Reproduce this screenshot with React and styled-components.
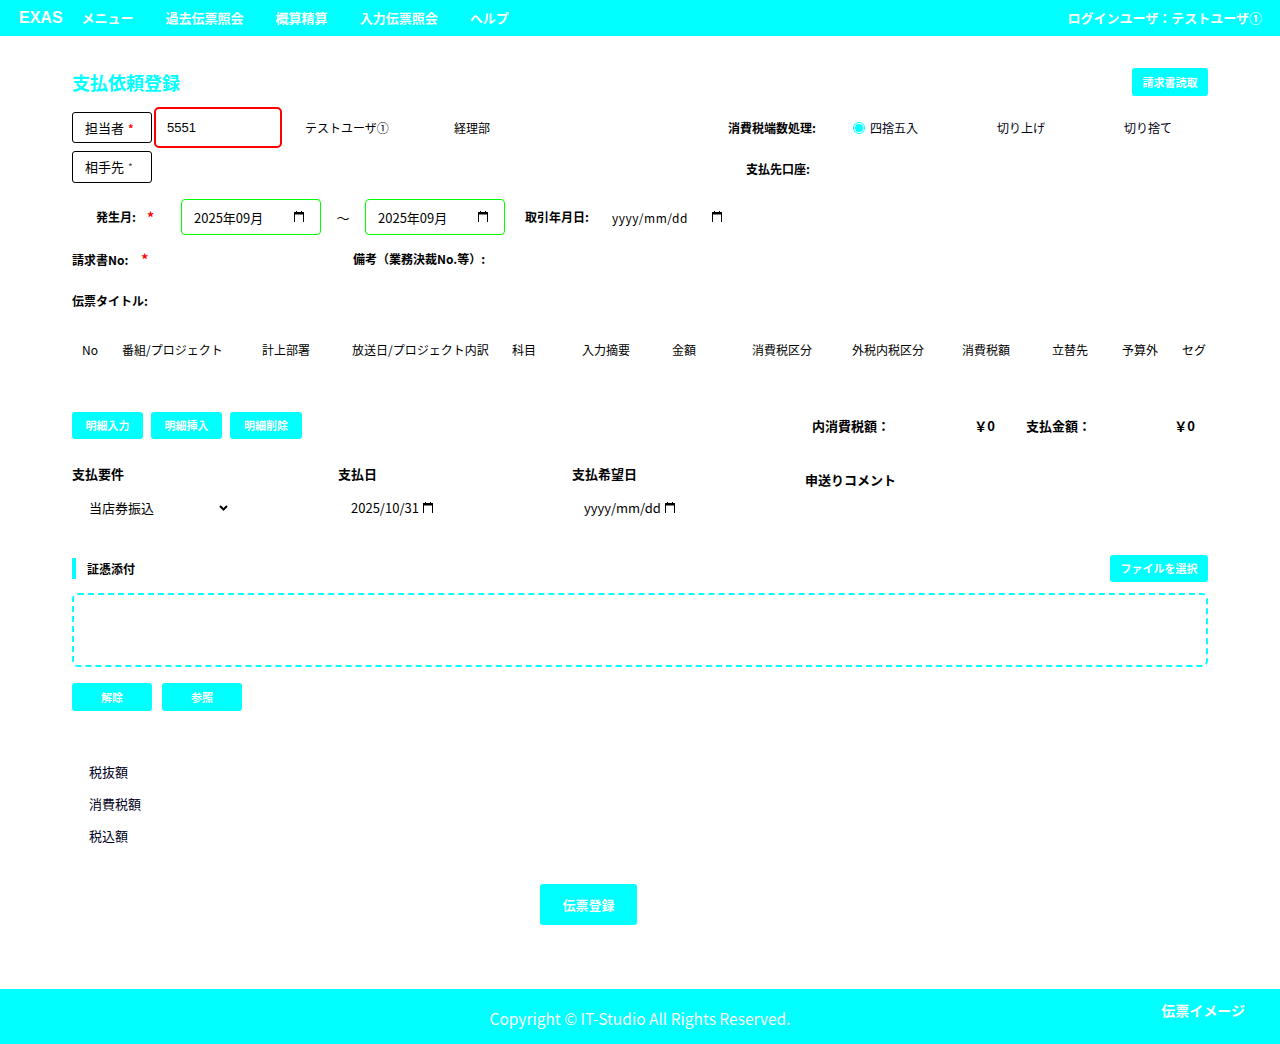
import React from 'react';
import styled, { createGlobalStyle } from 'styled-components';

const CYAN = '#00ffff';
const FONT = '"Noto Sans CJK JP", "Liberation Sans", sans-serif';

const Global = createGlobalStyle`
  html, body { margin: 0; padding: 0; background: #fff; }
  body { font-family: ${FONT}; color: #000; }
  * { box-sizing: border-box; }
`;

const Page = styled.div`
  width: 1280px;
  min-height: 1044px;
  display: flex;
  flex-direction: column;
`;

const Header = styled.header`
  height: 36px;
  background: ${CYAN};
  display: flex;
  align-items: center;
  padding: 0 18px 0 19px;
  color: #fff;
`;
const Logo = styled.div`
  font-family: "Liberation Sans", sans-serif;
  font-weight: 700;
  font-size: 16px;
  margin-right: 19px;
`;
const Nav = styled.nav`
  display: flex;
  gap: 32px;
`;
const NavItem = styled.span`
  font-size: 13px;
  font-weight: 700;
  line-height: 18px;
`;
const LoginUser = styled.span`
  margin-left: auto;
  font-size: 13px;
  font-weight: 700;
  line-height: 18px;
`;

const Main = styled.main`
  flex: 1;
  padding: 32px 72px 58px;
  display: flex;
  flex-direction: column;
`;

const TitleRow = styled.div`
  display: flex;
  justify-content: space-between;
  align-items: center;
  height: 28px;
`;
const Title = styled.h1`
  margin: 0;
  font-size: 18px;
  font-weight: 700;
  color: ${CYAN};
  line-height: 24px;
`;

const CyanButton = styled.button`
  background: ${CYAN};
  color: #fff;
  border: none;
  border-radius: 3px;
  font-family: ${FONT};
  font-weight: 700;
  font-size: ${(p) => p.$fs || 11}px;
  width: ${(p) => (p.$w ? `${p.$w}px` : 'auto')};
  height: ${(p) => p.$h || 28}px;
  padding: 0 ${(p) => (p.$w ? 0 : 9)}px;
  margin-left: ${(p) => (p.$push ? 'auto' : '0')};
  display: inline-flex;
  align-items: center;
  justify-content: center;
  line-height: 1;
  cursor: pointer;
`;

const TopGrid = styled.div`
  margin-top: 11px;
  display: grid;
  grid-template-columns: 656px 1fr;
  grid-template-rows: 41px 32px;
  row-gap: 3px;
`;
const Cell = styled.div`
  display: flex;
  align-items: center;
  padding-left: ${(p) => p.$pl || 0}px;
  padding-top: ${(p) => p.$pt || 0}px;
`;
const LabelBox = styled.div`
  width: 80px;
  height: ${(p) => p.$h || 31}px;
  border: 1px solid #000;
  border-radius: 3px;
  display: flex;
  align-items: center;
  padding-left: 12px;
  font-size: 13px;
  line-height: 18px;
`;
const Req = styled.span`
  color: ${(p) => (p.$muted ? '#444' : '#f00')};
  font-size: ${(p) => p.$fs || 11}px;
  margin-left: ${(p) => p.$ml || 4}px;
  font-weight: ${(p) => (p.$muted ? 400 : 700)};
`;
const RedInput = styled.div`
  margin-left: 2px;
  width: 128px;
  height: 41px;
  border: 2px solid #f00;
  border-radius: 5px;
  display: flex;
  align-items: center;
  padding-left: 11px;
  font-size: 13px;
  font-family: "Liberation Sans", sans-serif;
`;
const Plain = styled.span`
  font-size: ${(p) => p.$fs || 12}px;
  font-weight: ${(p) => (p.$bold ? 700 : 400)};
  line-height: 18px;
  width: ${(p) => (p.$w ? `${p.$w}px` : 'auto')};
  margin-left: ${(p) => p.$ml || 0}px;
  white-space: nowrap;
  flex-shrink: 0;
`;
const RadioOpt = styled.label`
  display: flex;
  align-items: center;
  width: ${(p) => (p.$w ? `${p.$w}px` : 'auto')};
  font-size: 12px;
  line-height: 18px;
  color: #001;
`;
const RadioDot = styled.span`
  width: 12px;
  height: 12px;
  border: 1px solid ${CYAN};
  border-radius: 50%;
  display: inline-flex;
  align-items: center;
  justify-content: center;
  margin-right: 5px;
  &::after {
    content: '';
    width: 8px;
    height: 8px;
    border-radius: 50%;
    background: ${CYAN};
  }
`;

const DateRow = styled.div`
  margin-top: 16px;
  height: 36px;
  display: flex;
  align-items: center;
`;
const DateLabel = styled.div`
  width: 109px;
  padding-left: 24px;
  display: flex;
  align-items: center;
  font-size: 12px;
  font-weight: 700;
  line-height: 18px;
`;
const GreenInput = styled.div`
  width: 140px;
  height: 36px;
  border: 1px solid #00ff00;
  border-radius: 4px;
  display: flex;
  align-items: center;
  justify-content: space-between;
  padding: 0 16px 0 12px;
  font-size: 13px;
`;
const Tilde = styled.span`
  width: 44px;
  text-align: center;
  font-size: 13px;
`;
const FakeDate = styled.div`
  display: flex;
  align-items: center;
  justify-content: space-between;
  width: ${(p) => p.$w}px;
  margin-left: ${(p) => p.$ml || 0}px;
  font-size: 12px;
  letter-spacing: 0.5px;
`;

const TextRow = styled.div`
  margin-top: ${(p) => p.$mt}px;
  height: 18px;
  display: flex;
  align-items: center;
`;

const TableHead = styled.div`
  margin-top: 31px;
  height: 18px;
  display: grid;
  grid-template-columns: 40px 140px 90px 160px 70px 90px 80px 100px 110px 90px 70px 60px 26px;
  padding-left: 10px;
  overflow: hidden;
`;
const Th = styled.span`
  font-size: 12px;
  line-height: 18px;
  white-space: nowrap;
  overflow: hidden;
`;

const ActionRow = styled.div`
  margin-top: 53px;
  height: 27px;
  display: flex;
  align-items: center;
`;
const ButtonGroup = styled.div`
  display: flex;
  gap: ${(p) => p.$gap || 8}px;
`;
const Totals = styled.div`
  margin-left: auto;
  margin-right: 13px;
  display: flex;
  align-items: center;
`;
const TotalLabel = styled.span`
  font-size: 13px;
  font-weight: 700;
  line-height: 18px;
  margin-left: ${(p) => p.$ml || 0}px;
`;
const TotalValue = styled.span`
  width: ${(p) => p.$w}px;
  text-align: right;
  font-size: 13px;
  font-weight: 700;
  line-height: 18px;
`;

const PayGrid = styled.div`
  margin-top: 26px;
  display: grid;
  grid-template-columns: 266px 234px 233px 1fr;
`;
const PayCol = styled.div`
  display: flex;
  flex-direction: column;
`;
const PayLabel = styled.span`
  font-size: 13px;
  font-weight: 700;
  line-height: 18px;
  margin-top: ${(p) => p.$mt || 0}px;
`;
const PayValue = styled.div`
  margin-top: 16px;
  height: 18px;
  display: flex;
  align-items: center;
  padding-left: ${(p) => p.$pl}px;
  font-size: 13px;
  line-height: 18px;
  gap: 4px;
`;
const SelectBox = styled.div`
  width: 139px;
  display: flex;
  align-items: center;
  justify-content: space-between;
`;

const SectionRow = styled.div`
  margin-top: 38px;
  height: 27px;
  display: flex;
  align-items: center;
`;
const SectionTitle = styled.div`
  display: flex;
  align-items: center;
  font-size: 12px;
  font-weight: 700;
  line-height: 18px;
  &::before {
    content: '';
    width: 4px;
    height: 21px;
    background: ${CYAN};
    margin-right: 11px;
  }
`;
const DropZone = styled.div`
  margin-top: 11px;
  height: 74px;
  border: 2px dashed ${CYAN};
  border-radius: 6px;
`;
const AttachButtons = styled.div`
  margin-top: 16px;
  display: flex;
  gap: 10px;
`;

const Summary = styled.div`
  margin-top: 52px;
  padding-left: 17px;
  display: flex;
  flex-direction: column;
  gap: 14px;
`;
const SummaryItem = styled.span`
  font-size: 13px;
  line-height: 18px;
  color: #000022;
`;

const SubmitRow = styled.div`
  margin-top: 39px;
  padding-left: 468px;
`;

const Footer = styled.footer`
  height: 55px;
  background: ${CYAN};
  color: #fff;
  position: relative;
  display: flex;
  align-items: center;
  justify-content: center;
`;
const Copyright = styled.span`
  font-size: 15.5px;
  line-height: 18px;
  margin-top: 2px;
`;
const FooterLink = styled.span`
  position: absolute;
  right: 35px;
  top: 12px;
  font-size: 14px;
  font-weight: 700;
  line-height: 18px;
`;

const CalIcon = () => (
  <svg width="10" height="12" viewBox="0 0 10 12" aria-hidden="true">
    <rect x="0" y="1" width="10" height="2.5" fill="#000" />
    <rect x="0" y="1" width="1" height="10" fill="#000" />
    <rect x="9" y="1" width="1" height="10" fill="#000" />
    <rect x="2" y="0" width="1" height="2" fill="#000" />
    <rect x="7" y="0" width="1" height="2" fill="#000" />
  </svg>
);

const Chevron = () => (
  <svg width="9" height="6" viewBox="0 0 9 6" aria-hidden="true">
    <path d="M1 1 L4.5 4.5 L8 1" stroke="#000" strokeWidth="2" fill="none" />
  </svg>
);

const headers = [
  'No', '番組/プロジェクト', '計上部署', '放送日/プロジェクト内訳', '科目', '入力摘要', '金額',
  '消費税区分', '外税内税区分', '消費税額', '立替先', '予算外', 'セグ',
];

export default function App() {
  return (
    <Page>
      <Global />
      <Header>
        <Logo>EXAS</Logo>
        <Nav>
          <NavItem>メニュー</NavItem>
          <NavItem>過去伝票照会</NavItem>
          <NavItem>概算精算</NavItem>
          <NavItem>入力伝票照会</NavItem>
          <NavItem>ヘルプ</NavItem>
        </Nav>
        <LoginUser>ログインユーザ：テストユーザ①</LoginUser>
      </Header>

      <Main>
        <TitleRow>
          <Title>支払依頼登録</Title>
          <CyanButton $w={76}>請求書読取</CyanButton>
        </TitleRow>

        <TopGrid>
          <Cell>
            <LabelBox>担当者<Req>*</Req></LabelBox>
            <RedInput>5551</RedInput>
            <Plain $ml={23} $w={149}>テストユーザ①</Plain>
            <Plain>経理部</Plain>
          </Cell>
          <Cell>
            <Plain $bold $w={125}>消費税端数処理:</Plain>
            <RadioOpt $w={144}><RadioDot />四捨五入</RadioOpt>
            <RadioOpt $w={127}>切り上げ</RadioOpt>
            <RadioOpt>切り捨て</RadioOpt>
          </Cell>
          <Cell>
            <LabelBox $h={32}>相手先<Req $fs={10} $muted>*</Req></LabelBox>
          </Cell>
          <Cell $pl={18} $pt={4}>
            <Plain $bold>支払先口座:</Plain>
          </Cell>
        </TopGrid>

        <DateRow>
          <DateLabel>発生月:<Req $fs={14} $ml={11}>*</Req></DateLabel>
          <GreenInput>2025年09月<CalIcon /></GreenInput>
          <Tilde>～</Tilde>
          <GreenInput>2025年09月<CalIcon /></GreenInput>
          <Plain $bold $ml={20} $w={87}>取引年月日:</Plain>
          <FakeDate $w={110}>yyyy/mm/dd<CalIcon /></FakeDate>
        </DateRow>

        <TextRow $mt={15}>
          <Plain $bold $w={281}>請求書No: <Req $fs={14} $ml={10}>*</Req></Plain>
          <Plain $bold>備考（業務決裁No.等）:</Plain>
        </TextRow>

        <TextRow $mt={24}>
          <Plain $bold>伝票タイトル:</Plain>
        </TextRow>

        <TableHead>
          {headers.map((h) => (
            <Th key={h}>{h}</Th>
          ))}
        </TableHead>

        <ActionRow>
          <ButtonGroup>
            <CyanButton $w={71} $h={27}>明細入力</CyanButton>
            <CyanButton $w={71} $h={27}>明細挿入</CyanButton>
            <CyanButton $w={72} $h={27}>明細削除</CyanButton>
          </ButtonGroup>
          <Totals>
            <TotalLabel>内消費税額：</TotalLabel>
            <TotalValue $w={105}>￥0</TotalValue>
            <TotalLabel $ml={31}>支払金額：</TotalLabel>
            <TotalValue $w={104}>￥0</TotalValue>
          </Totals>
        </ActionRow>

        <PayGrid>
          <PayCol>
            <PayLabel>支払要件</PayLabel>
            <PayValue $pl={17}>
              <SelectBox>当店券振込<Chevron /></SelectBox>
            </PayValue>
          </PayCol>
          <PayCol>
            <PayLabel>支払日</PayLabel>
            <PayValue $pl={13}>2025/10/31<CalIcon /></PayValue>
          </PayCol>
          <PayCol>
            <PayLabel>支払希望日</PayLabel>
            <PayValue $pl={12}>yyyy/mm/dd<CalIcon /></PayValue>
          </PayCol>
          <PayCol>
            <PayLabel $mt={6}>申送りコメント</PayLabel>
          </PayCol>
        </PayGrid>

        <SectionRow>
          <SectionTitle>証憑添付</SectionTitle>
          <CyanButton $h={27} $w={98} $push>ファイルを選択</CyanButton>
        </SectionRow>
        <DropZone />
        <AttachButtons>
          <CyanButton $w={80}>解除</CyanButton>
          <CyanButton $w={80}>参照</CyanButton>
        </AttachButtons>

        <Summary>
          <SummaryItem>税抜額</SummaryItem>
          <SummaryItem>消費税額</SummaryItem>
          <SummaryItem>税込額</SummaryItem>
        </Summary>

        <SubmitRow>
          <CyanButton $w={97} $h={41} $fs={13}>伝票登録</CyanButton>
        </SubmitRow>
      </Main>

      <Footer>
        <Copyright>Copyright © IT-Studio All Rights Reserved.</Copyright>
        <FooterLink>伝票イメージ</FooterLink>
      </Footer>
    </Page>
  );
}
